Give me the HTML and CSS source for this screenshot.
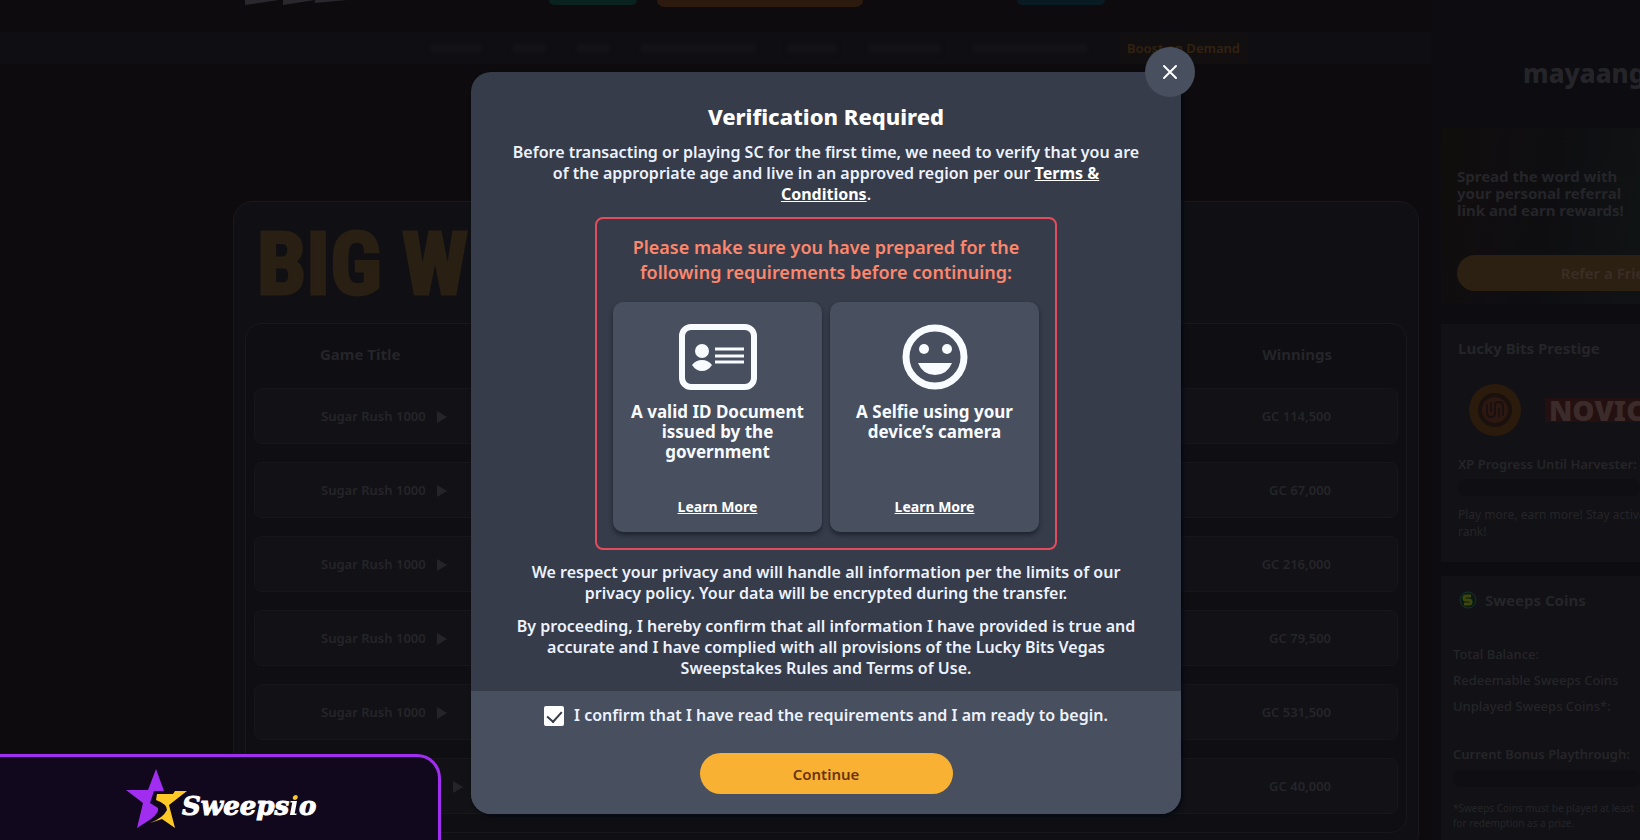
FILE: index.html
```html
<!DOCTYPE html>
<html lang="en">
<head>
    <meta charset="UTF-8">
    <meta name="viewport" content="width=device-width, initial-scale=1.0">
    <title>Verification Required</title>
    <link rel="stylesheet" href="styles.css">
</head>
<body>
    <div class="page">
        <main class="main">
            <header class="header">
                <svg class="brand" width="102" height="6" viewBox="0 0 102 6">
                    <path d="M0 0H34L0 5zM38 0H70L38 5zM70 0H102L70 3z" fill="#2a282c"/>
                </svg>
                <span class="pill teal"></span>
                <span class="pill brown"></span>
                <span class="pill blue"></span>
            </header>
            <nav class="nav">
                <span class="smear"></span>
                <span class="smear small"></span>
                <span class="smear small"></span>
                <span class="smear wide"></span>
                <span class="smear"></span>
                <span class="smear medium"></span>
                <span class="smear wide"></span>
                <a class="boost" href="#">Boost on Demand</a>
            </nav>
            <section class="winners">
                <h2 class="winners-title">BIG WINS</h2>
                <div class="table-box">
                    <table class="table">
                        <thead>
                            <tr><th>Game Title</th><th class="right">Winnings</th></tr>
                        </thead>
                        <tbody>
                            <tr><td>Sugar Rush 1000<span class="play"></span></td><td class="right">GC 114,500</td></tr>
                            <tr><td>Sugar Rush 1000<span class="play"></span></td><td class="right">GC 67,000</td></tr>
                            <tr><td>Sugar Rush 1000<span class="play"></span></td><td class="right">GC 216,000</td></tr>
                            <tr><td>Sugar Rush 1000<span class="play"></span></td><td class="right">GC 79,500</td></tr>
                            <tr><td>Sugar Rush 1000<span class="play"></span></td><td class="right">GC 531,500</td></tr>
                            <tr><td class="last">Sugar Rush 1000<span class="play"></span></td><td class="right">GC 40,000</td></tr>
                        </tbody>
                    </table>
                </div>
            </section>
        </main>

        <aside class="sidebar">
            <div class="user">mayaang</div>
            <div class="referral">
                <p>Spread the word with<br>your personal referral<br>link and earn rewards!</p>
                <button class="refer">Refer a Friend</button>
            </div>
            <div class="card prestige">
                <h3>Lucky Bits Prestige</h3>
                <div class="rank">
                    <svg width="52" height="52" viewBox="0 0 52 52">
                        <circle cx="26" cy="26" r="26" fill="#2b1b0d"/>
                        <circle cx="26" cy="26" r="17" fill="#1a100e"/>
                        <circle cx="26" cy="26" r="13" fill="#2c1711"/>
                        <path d="M18 20v9q0 4 4 4t4-4v-8q0-3 4-3t4 4v10M22 18v10M30 24v9" fill="none" stroke="#19100f" stroke-width="2"/>
                    </svg>
                    <span class="novice">NOVICE</span>
                </div>
                <p class="xp">XP Progress Until Harvester: 0</p>
                <div class="bar"></div>
                <p class="note">Play more, earn more! Stay active<br>rank!</p>
            </div>
            <div class="card coins">
                <h3>
                    <svg width="18" height="18" viewBox="0 0 18 18">
                        <circle cx="9" cy="9" r="8" fill="#0c1a14" stroke="#17302b" stroke-width="1"/>
                        <path d="M12 5H7q-2 0-2 2t2 2h3q2 0 2 2t-2 2H5" fill="none" stroke="#3d460b" stroke-width="3"/>
                    </svg>
                    Sweeps Coins
                </h3>
                <p class="line">Total Balance:</p>
                <p class="line">Redeemable Sweeps Coins</p>
                <p class="line">Unplayed Sweeps Coins*:</p>
                <p class="bonus">Current Bonus Playthrough:</p>
                <div class="bar"></div>
                <p class="foot">*Sweeps Coins must be played at least<br>for redemption as a prize.</p>
            </div>
        </aside>
    </div>

    <div class="banner">
        <svg width="62" height="60" viewBox="0 0 62 60">
            <path d="M30 0L38 22H28L24 34L32 39Q33 44 25 50L11 59L17 34L0 21H22z" fill="#a02df0"/>
            <path d="M31 25H47L49 22H61L43 36L49 59L36 50L24 54Q37 49 41 41Q41 35 30 31z" fill="#fcc926"/>
        </svg>
        <span class="logo-text">Sweeps<span class="logo-i">i</span>o</span>
    </div>

    <div class="overlay">
        <div class="modal" role="dialog" aria-labelledby="modal-title">
            <button class="close" aria-label="Close">
                <svg width="16" height="16" viewBox="0 0 16 16">
                    <path d="M2 2L14 14M14 2L2 14" stroke="#fff" stroke-width="2" stroke-linecap="round"/>
                </svg>
            </button>
            <div class="content">
                <h1 id="modal-title">Verification Required</h1>
                <p>Before transacting or playing SC for the first time, we need to verify that you are of the appropriate age and live in an approved region per our <a href="#">Terms &amp; Conditions</a>.</p>
                <div class="requirements">
                    <h2>Please make sure you have prepared for the following requirements before continuing:</h2>
                    <div class="options">
                        <div class="option">
                            <svg width="78" height="66" viewBox="0 0 78 66">
                                <rect x="3" y="3" width="72" height="60" rx="9" fill="none" stroke="#f8fbff" stroke-width="6"/>
                                <circle cx="23" cy="27" r="7" fill="#f8fbff"/>
                                <path d="M13 41Q17 36 23 36T33 41Q29 47 23 47T13 41z" fill="#f8fbff"/>
                                <path d="M36 25H65M36 32H65M36 38H65" stroke="#f8fbff" stroke-width="3"/>
                            </svg>
                            <h3>A valid ID Document issued by the government</h3>
                            <a href="#">Learn More</a>
                        </div>
                        <div class="option">
                            <svg width="66" height="66" viewBox="0 0 66 66">
                                <circle cx="33" cy="33" r="29" fill="none" stroke="#f8fbff" stroke-width="7"/>
                                <circle cx="22" cy="25" r="5" fill="#f8fbff"/>
                                <circle cx="45" cy="25" r="5" fill="#f8fbff"/>
                                <path d="M16 39H50Q45 51 33 51T16 39z" fill="#f8fbff"/>
                            </svg>
                            <h3>A Selfie using your device’s camera</h3>
                            <a href="#">Learn More</a>
                        </div>
                    </div>
                </div>
                <p class="privacy">We respect your privacy and will handle all information per the limits of our privacy policy. Your data will be encrypted during the transfer.</p>
                <p>By proceeding, I hereby confirm that all information I have provided is true and accurate and I have complied with all provisions of the Lucky Bits Vegas Sweepstakes Rules and Terms of Use.</p>
            </div>
            <div class="actions">
                <label class="confirm" for="confirm">
                    <input type="checkbox" id="confirm" checked>
                    I confirm that I have read the requirements and I am ready to begin.
                </label>
                <button class="continue">Continue</button>
            </div>
        </div>
    </div>
</body>
</html>
```
FILE: styles.css
```css
*{
    box-sizing: border-box;
}
body{
    margin: 0;
    background-color: #0d0b0e;
    color: #252529;
    font-family: "Noto Sans", "Open Sans", sans-serif;
}
h1, h2, h3, p{
    margin: 0;
}
button{
    font-family: inherit;
    border: none;
    cursor: pointer;
}
.page{
    display: flex;
    height: 100vh;
    overflow: hidden;
}
.main{
    flex: 1;
    min-width: 0;
}
/* top bar */
.header{
    display: flex;
    height: 32px;
    padding-left: 245px;
}
.pill{
    width: 88px;
    height: 5px;
    margin-left: 202px;
    border-radius: 0 0 16px 16px;
}
.teal{
    background-color: #092220;
}
.brown{
    width: 206px;
    height: 7px;
    margin-left: 20px;
    background-color: #2b1a0d;
}
.blue{
    margin-left: 154px;
    background-color: #081b22;
}
.nav{
    display: flex;
    align-items: center;
    gap: 32px;
    height: 32px;
    padding-left: 431px;
    background-color: #0e0e13;
    font-size: 13px;
}
.smear{
    width: 50px;
    height: 9px;
    background-color: #131318;
    filter: blur(2px);
}
.smear.small{
    width: 32px;
}
.smear.medium{
    width: 72px;
}
.smear.wide{
    width: 114px;
}
.boost{
    padding: 6px 8px;
    background-color: #120f11;
    color: #33220f;
    font-weight: 600;
    text-decoration: none;
    white-space: nowrap;
}
/* winners table */
.winners{
    margin: 137px 12px 0 233px;
    padding: 0 11px 20px;
    border: 1px solid #19181d;
    border-radius: 20px;
    background-color: #101014;
}
.winners-title{
    height: 121px;
    padding-left: 12px;
    color: #292013;
    font-family: "Roboto Condensed", "Open Sans Condensed", "Liberation Sans Narrow", "Liberation Sans", sans-serif;
    font-size: 88px;
    line-height: 124px;
    white-space: nowrap;
    -webkit-text-stroke: 3px #292013;
}
.table-box{
    padding: 0 8px;
    border: 1px solid #19181d;
    border-radius: 16px;
    background-color: #0f0e13;
}
.table{
    width: 100%;
    border-spacing: 0 18px;
}
th{
    height: 28px;
    padding: 0 66px;
    font-size: 15px;
    line-height: 24px;
    text-align: left;
    vertical-align: top;
}
td{
    height: 56px;
    padding: 0 66px;
    background-color: #121116;
    border: solid #17161b;
    border-width: 1px 0;
    font-size: 13px;
    font-weight: 600;
}
td:first-child{
    border-left-width: 1px;
    border-radius: 8px 0 0 8px;
}
td:last-child{
    border-right-width: 1px;
    border-radius: 0 8px 8px 0;
}
td.last{
    padding-left: 82px;
}
th.right, td.right{
    text-align: right;
}
.play{
    display: inline-block;
    margin-left: 11px;
    border-left: 10px solid #252529;
    border-top: 6px solid transparent;
    border-bottom: 6px solid transparent;
    vertical-align: middle;
}
/* sidebar */
.sidebar{
    width: 209px;
    padding-left: 10px;
    background-color: #0d0c10;
    overflow: hidden;
    white-space: nowrap;
}
.user{
    height: 128px;
    padding: 55px 0 0 82px;
    font-size: 26px;
    font-weight: 800;
}
.referral{
    height: 176px;
    padding: 40px 0 0 16px;
    background-image: linear-gradient(100deg, #110d0d, #0e0e11 50%, #101314);
    font-size: 15px;
    font-weight: 700;
    line-height: 17px;
}
.refer{
    width: 310px;
    height: 36px;
    margin-top: 36px;
    border-radius: 20px;
    background-color: #2c2012;
    color: #3a2e25;
    font-size: 15px;
    font-weight: 600;
}
.card{
    background-color: #121115;
}
.card h3{
    display: flex;
    align-items: center;
    gap: 8px;
    font-size: 15px;
    font-weight: 700;
    line-height: 20px;
}
.prestige{
    height: 238px;
    margin-top: 20px;
    padding: 14px 0 0 17px;
}
.rank{
    display: flex;
    align-items: center;
    gap: 24px;
    padding: 26px 0 18px 11px;
}
.rank svg{
    flex-shrink: 0;
}
.novice{
    padding: 0 4px;
    background-color: #241010;
    color: #3c2b2b;
    font-size: 28px;
    font-weight: 900;
    line-height: 24px;
}
.xp{
    font-size: 13px;
    font-weight: 600;
    line-height: 20px;
}
.bar{
    height: 17px;
    margin-top: 5px;
    border-radius: 8px;
    background-color: #0f0e12;
}
.note{
    margin-top: 10px;
    font-size: 12px;
    line-height: 17px;
}
.coins{
    height: 300px;
    margin-top: 14px;
    padding: 14px 0 0 12px;
}
.coins h3{
    padding-left: 6px;
    margin-bottom: 31px;
}
.line{
    font-size: 13px;
    font-weight: 500;
    line-height: 26px;
}
.bonus{
    margin-top: 24px;
    font-size: 13px;
    font-weight: 600;
    line-height: 22px;
}
.foot{
    margin-top: 14px;
    font-size: 10px;
    line-height: 15px;
}
/* sweepsio banner */
.banner{
    position: fixed;
    left: 0;
    bottom: 0;
    z-index: 2;
    display: flex;
    align-items: center;
    width: 441px;
    height: 86px;
    padding-left: 126px;
    border-top: 3px solid #a02df0;
    border-right: 3px solid #a02df0;
    border-top-right-radius: 24px;
    background-color: #12081d;
}
.logo-text{
    margin-left: -6px;
    padding-top: 14px;
    color: #fff;
    font-family: "DejaVu Serif", serif;
    font-size: 26px;
    font-style: italic;
    font-weight: 700;
    -webkit-text-stroke: 1px #fff;
}
.logo-i{
    background-image: linear-gradient(#fcc926 32%, #fff 32%);
    background-clip: text;
    -webkit-background-clip: text;
    color: transparent;
    -webkit-text-stroke: 0;
}
/* modal */
.overlay{
    position: absolute;
    inset: 0;
    z-index: 1;
    display: flex;
    justify-content: center;
    align-items: flex-start;
    padding: 72px 0 0 12px;
}
.modal{
    position: relative;
    width: 710px;
    border-radius: 20px;
    background-color: #363c49;
    box-shadow: 2px 2px 4px #050910;
    color: #edf2ff;
    font-size: 16px;
    font-weight: 600;
    line-height: 21px;
    text-align: center;
}
.modal a{
    color: #fff;
    font-weight: 700;
}
.close{
    position: absolute;
    top: -25px;
    right: -14px;
    display: flex;
    align-items: center;
    justify-content: center;
    width: 50px;
    height: 50px;
    padding: 0;
    border-radius: 50%;
    background-color: #484f5f;
}
.content{
    padding: 29px 38px 12px;
}
h1{
    margin-bottom: 11px;
    color: #fff;
    font-size: 22px;
    font-weight: 800;
    line-height: 30px;
}
.requirements{
    width: 462px;
    margin: 12px auto;
    padding: 16px;
    border: 2px solid #e44c5b;
    border-radius: 8px;
}
.requirements h2{
    margin-bottom: 17px;
    color: #fd876d;
    font-size: 18px;
    font-weight: 600;
    line-height: 25px;
}
.options{
    display: grid;
    grid-template-columns: 1fr 1fr;
    gap: 8px;
}
.option{
    display: flex;
    flex-direction: column;
    align-items: center;
    height: 230px;
    padding: 22px 14px 15px;
    border-radius: 10px;
    background-color: #484f5e;
    box-shadow: 0 3px 4px #1e2431;
}
.option h3{
    margin-top: 12px;
    color: #f8fbff;
    font-size: 17px;
    font-weight: 700;
    line-height: 20px;
}
.option a{
    margin-top: auto;
    font-size: 14px;
}
.privacy{
    margin-bottom: 12px;
}
.actions{
    display: flex;
    flex-direction: column;
    align-items: center;
    padding: 14px 0 20px;
    border-radius: 0 0 20px 20px;
    background-color: #484f5e;
}
.confirm{
    display: flex;
    align-items: center;
    gap: 10px;
}
.confirm input{
    appearance: none;
    display: flex;
    justify-content: center;
    width: 20px;
    height: 20px;
    margin: 0;
    padding-top: 2px;
    border-radius: 2px;
    background-color: #fff;
}
.confirm input:checked::after{
    content: "";
    width: 7px;
    height: 12px;
    border: solid #363c49;
    border-width: 0 2px 2px 0;
    transform: rotate(42deg);
}
.continue{
    width: 253px;
    height: 41px;
    margin-top: 27px;
    border-radius: 21px;
    background-color: #f8b133;
    color: #6b3410;
    font-size: 15px;
    font-weight: 600;
}
```
